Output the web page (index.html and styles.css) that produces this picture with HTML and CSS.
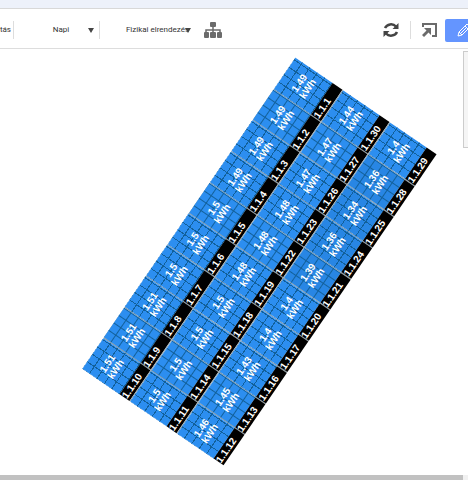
FILE: index.html
```html
<!doctype html>
<html lang="hu">
<head>
    <meta charset="UTF-8">
    <meta name="viewport" content="width=device-width, initial-scale=1.0">
    <title>Fizikai elrendezés</title>
    <link rel="stylesheet" href="styles.css">
</head>
<body>
    <div class="topbar"></div>
    <div class="toolbar">
        <div class="tool-cut">tás</div>
        <div class="tool-period">
            <select class="tool-select" aria-label="Időszak">
                <option>Napi</option>
            </select>
            <span class="arrow"></span>
        </div>
        <div class="tool-layout">
            <select class="tool-select" aria-label="Nézet">
                <option>Fizikai elrendezés</option>
            </select>
            <span class="arrow"></span>
        </div>
        <button class="icon-btn" aria-label="Hierarchia">
            <svg width="20" height="18" viewBox="0 0 20 18" fill="#6b6b6b">
                <rect x="7" y="1" width="6" height="5" rx="1"/>
                <rect x="1" y="11" width="5" height="6" rx="1"/>
                <rect x="7" y="11" width="6" height="6" rx="1"/>
                <rect x="14" y="11" width="5" height="6" rx="1"/>
                <path d="M10 5v7M3 12V9h14v3" fill="none" stroke="#6b6b6b" stroke-width="1.5"/>
            </svg>
        </button>
        <div class="tool-right">
            <button class="icon-btn" aria-label="Frissítés">
                <svg width="18" height="18" viewBox="0 0 18 18" fill="#444">
                    <path d="M3 7A6.500 6 0 0 1 14 5.500M15 11A6.500 6 0 0 1 4 12.500" fill="none" stroke="#444" stroke-width="2.500"/>
                    <path d="M16.500 2v6h-6zM1.500 16v-6h6z"/>
                </svg>
            </button>
            <span class="line"></span>
            <button class="icon-btn" aria-label="Megnyitás">
                <svg width="18" height="18" viewBox="0 0 18 18" fill="#6b6b6b">
                    <path d="M2 6V3h13v12h-4" fill="none" stroke="#6b6b6b" stroke-width="2"/>
                    <path d="M3 7h7v7L7.500 11.500 3 16 1 14 5.500 9.500z"/>
                </svg>
            </button>
            <button class="edit-btn" aria-label="Szerkesztés">
                <svg width="14" height="14" viewBox="0 0 14 14" fill="none" stroke="#fff">
                    <path d="M1 13l1-4 8-8 3 3-8 8zM2 9l3 3M8 3l3 3M4 10l5-5"/>
                </svg>
            </button>
        </div>
    </div>
    <div class="canvas">
        <div class="array"></div>
        <div class="side-panel"></div>
    </div>
    <div class="scrollbar"><div class="thumb"></div></div>

    <script src="panels.js"></script>
</body>
</html>
```
FILE: styles.css
```css
*{
    box-sizing: border-box;
    padding: 0;
    margin: 0;
}
body{
    display: flex;
    flex-direction: column;
    height: 100vh;
    overflow: hidden;
    background: #fff;
    color: #333;
    font: 8px/12px "Liberation Sans", Arial, sans-serif;
}
button,
select{
    border: 0;
    background: none;
    color: inherit;
    font: inherit;
}
.topbar{
    flex: none;
    height: 9px;
    background: #edf1fa;
    border-bottom: 1px solid #d8d8d8;
}
.toolbar{
    flex: none;
    display: flex;
    align-items: center;
    height: 40px;
    padding-top: 3px;
    border-bottom: 1px solid #ddd;
}
.tool-cut{
    display: flex;
    justify-content: flex-end;
    width: 14px;
    height: 18px;
    padding-right: 2px;
    line-height: 18px;
    border-right: 1px solid #ddd;
}
.tool-period,
.tool-layout{
    display: flex;
    align-items: center;
    height: 18px;
}
.tool-period{
    width: 86px;
    padding-right: 5px;
    border-right: 1px solid #ddd;
}
.tool-layout{
    width: 91px;
    margin-right: 12px;
}
.tool-select{
    flex: 1;
    min-width: 0;
    appearance: none;
    text-align: center;
    text-align-last: center;
}
.tool-period .tool-select{
    padding-left: 20px;
}
.tool-layout .tool-select{
    padding-left: 24px;
    margin-right: -6px;
}
.tool-select,
.tool-cut{
    font-family: Roboto, "Liberation Sans", sans-serif;
}
.arrow{
    border: 3px solid transparent;
    border-top: 5px solid #444;
    border-bottom: 0;
}
.icon-btn{
    display: flex;
}
.tool-right{
    display: flex;
    align-items: center;
    gap: 10px;
    margin-left: auto;
}
.line{
    width: 1px;
    height: 18px;
    background: #ddd;
}
.edit-btn{
    display: flex;
    align-items: center;
    width: 23px;
    height: 23px;
    padding-left: 12px;
    margin-left: -4px;
    overflow: hidden;
    background: #6495ff;
    border-radius: 2px 0 0 2px;
}
.edit-btn svg{
    flex: none;
}
.canvas{
    flex: 1;
    position: relative;
}
/* the array is placed freely on the plan */
.array{
    position: absolute;
    left: 71px;
    top: 127px;
    display: grid;
    grid-template-columns: repeat(10, 1fr);
    width: 377px;
    transform: rotate(-55.6deg);
}
.panel{
    height: 57px;
    display: flex;
    flex-direction: column;
    border-right: 1px solid #8c9ca4;
    color: #fff;
    font: bold 10px/10px "Liberation Sans", Arial, sans-serif;
}
.panel:nth-child(10n){
    border-right: 0;
}
.panel:nth-child(n + 11){
    border-top: 1px solid #9aabb5;
}
.face{
    flex: 1;
    display: flex;
    flex-direction: column;
    justify-content: center;
    text-align: center;
    background: repeating-linear-gradient(90deg, transparent 0 8px, #12609a 8px 9px),
        repeating-linear-gradient(transparent 0 8px, #12609a 8px 9px),
        #2c8ef0;
}
.low .face{
    background-color: #2886e4;
}
.name{
    height: 12px;
    line-height: 12px;
    white-space: nowrap;
    background: #000;
}
.side-panel{
    position: absolute;
    top: 2px;
    right: 0;
    width: 5px;
    height: 97px;
    background: #f5f5f5;
    border: 1px solid #ccc;
    border-right: 0;
}
.scrollbar{
    flex: none;
    height: 5px;
    padding-right: 5px;
    background: #f1f1f1;
}
.thumb{
    height: 5px;
    background: #c1c1c1;
}
```
FILE: panels.js
```js
var array = document.querySelector('.array');
var rows = [
    [[10, 1.51], [9, 1.51], [8, 1.51], [7, 1.5], [6, 1.5], [5, 1.5], [4, 1.49], [3, 1.49], [2, 1.49], [1, 1.49]],
    [[11, 1.5], [14, 1.5], [15, 1.5], [18, 1.5], [19, 1.48], [22, 1.48], [23, 1.48], [26, 1.47], [27, 1.47], [30, 1.44]],
    [[12, 1.46], [13, 1.45], [16, 1.43], [17, 1.4], [20, 1.4], [21, 1.39], [24, 1.36], [25, 1.34], [28, 1.36], [29, 1.4]]
];

rows.forEach(function(row){
    row.forEach(function(item){
        var panel = document.createElement('div');
        panel.className = item[1] < 1.4 ? 'panel low' : 'panel';
        panel.innerHTML = '<div class="face"><span>' + item[1] + '</span><span>kWh</span></div>' +
            '<div class="name">1.1.' + item[0] + '</div>';
        array.appendChild(panel);
    });
});
```
